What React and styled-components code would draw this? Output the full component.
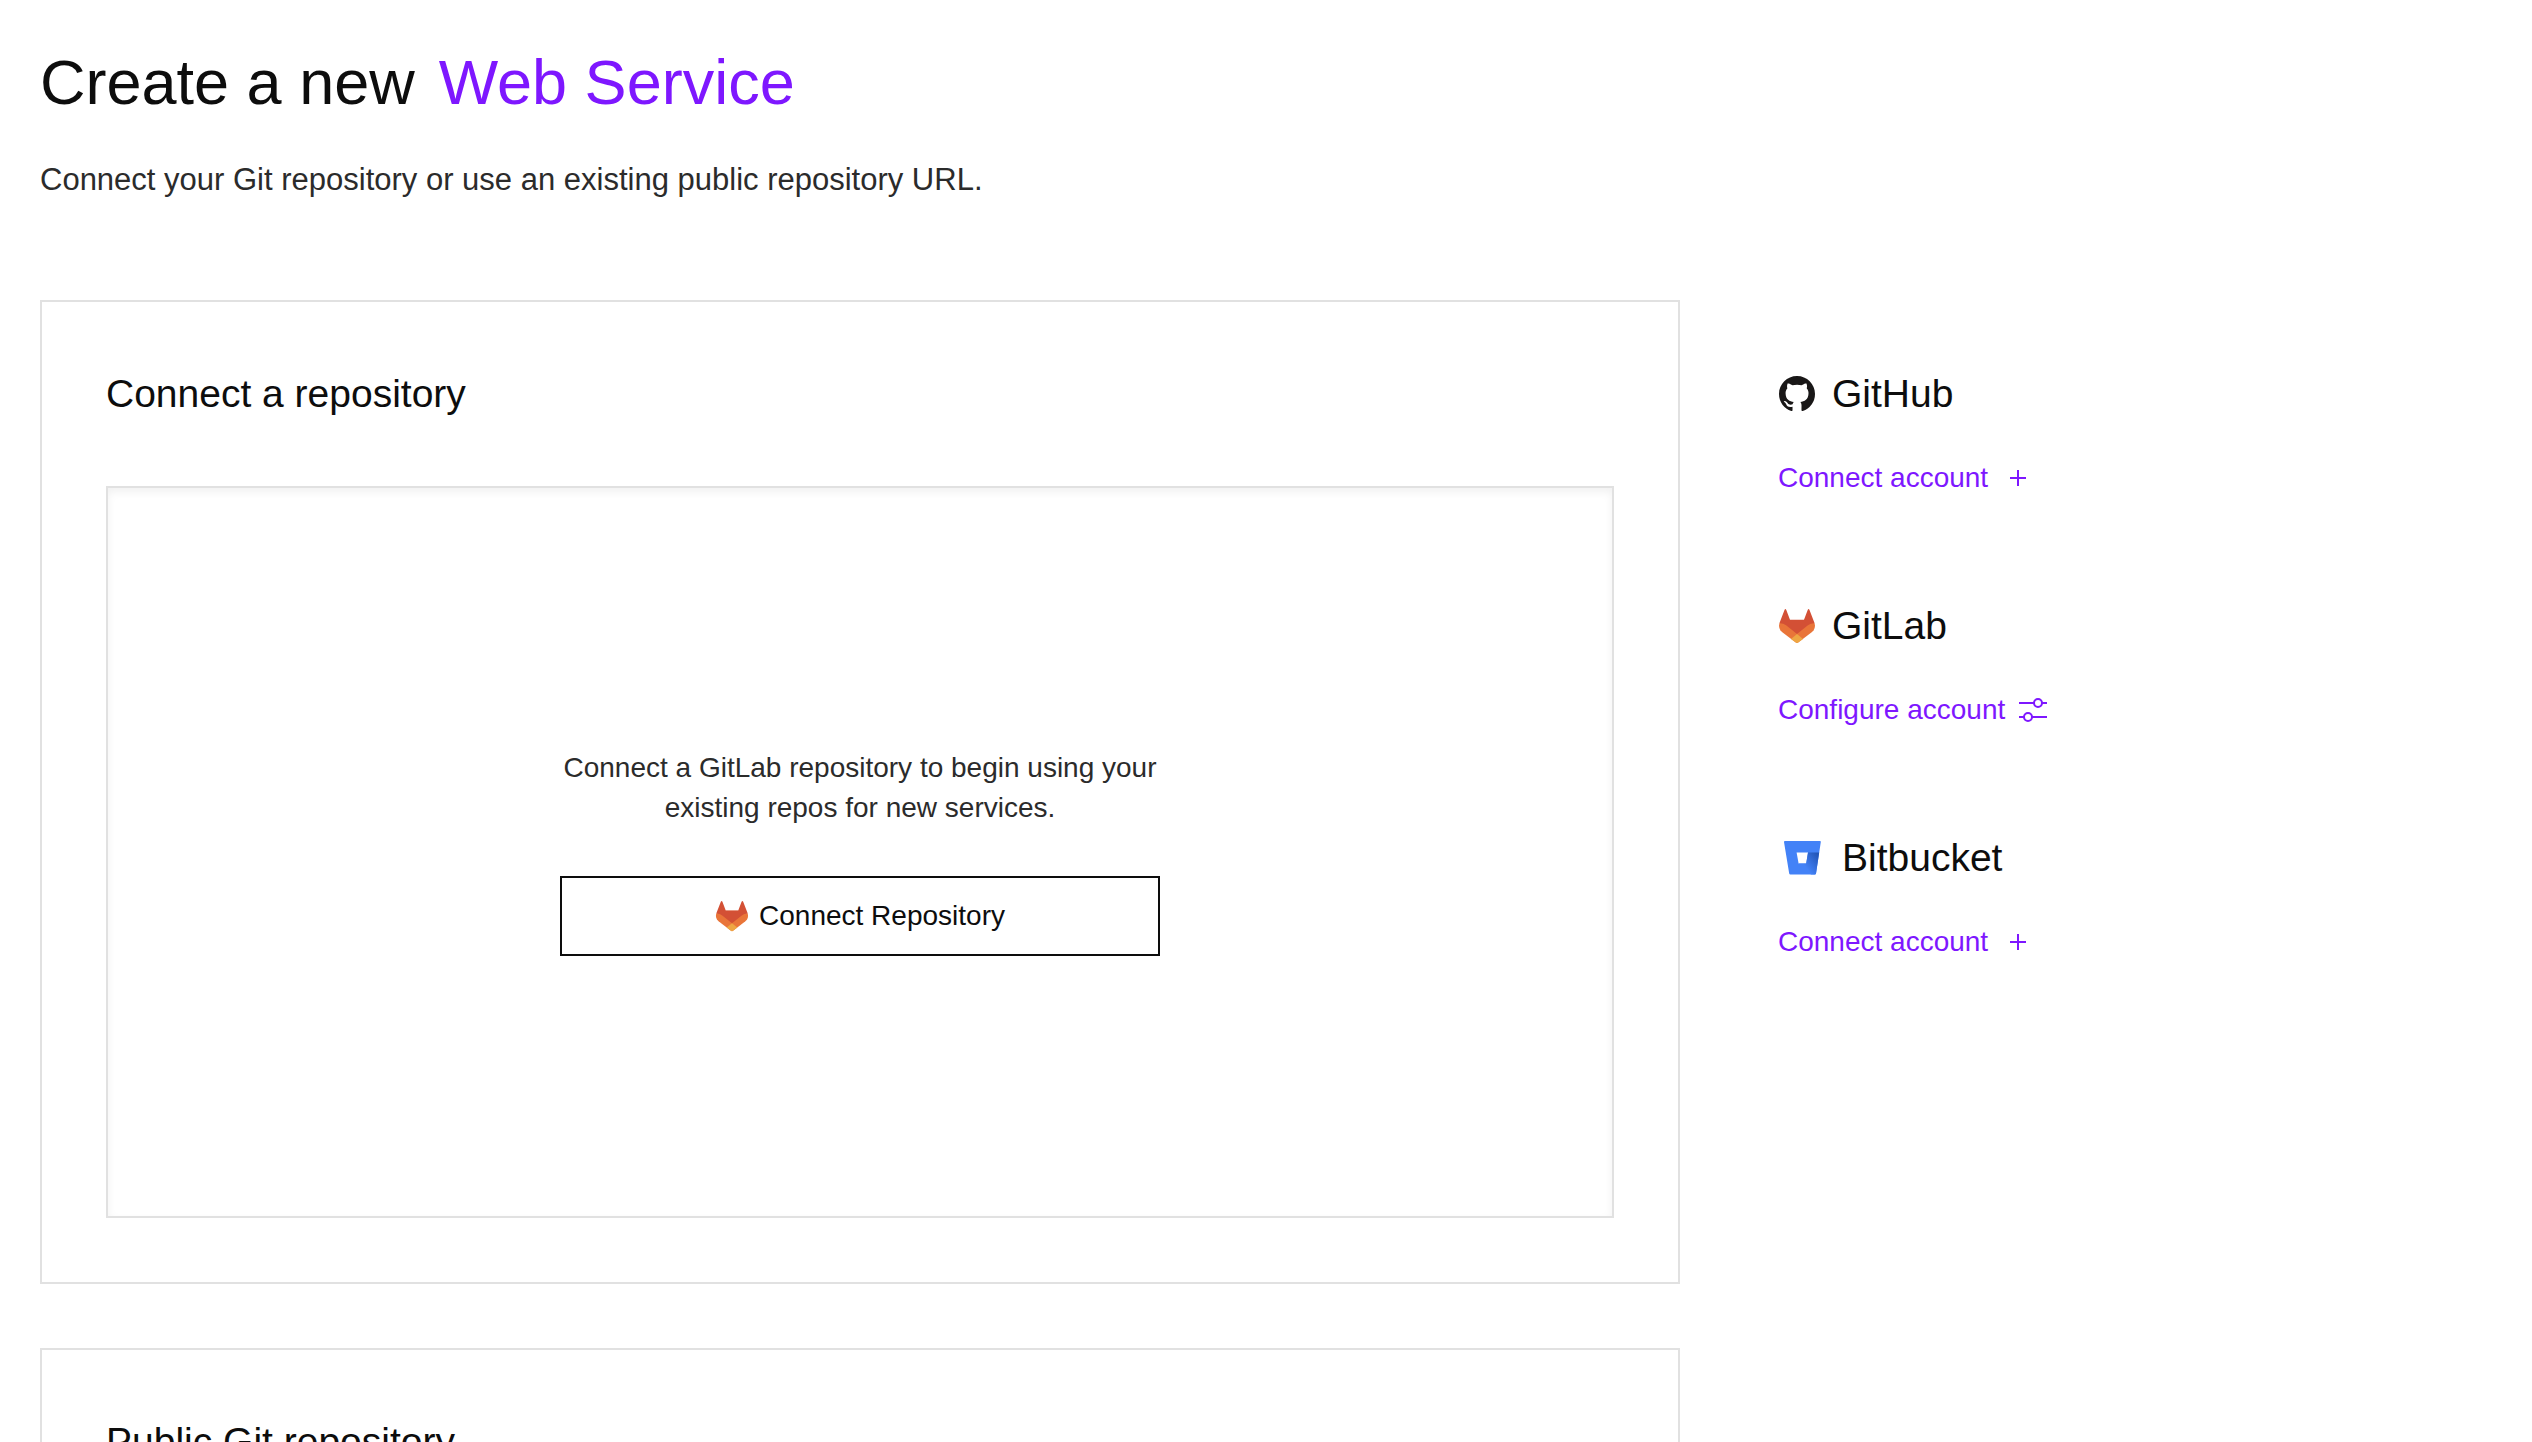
// IMPORTS
  //-Modules
  import { useId } from 'react'
  import styled, { createGlobalStyle } from 'styled-components'
//


// STYLES

  const colors = {
    dark: '#0d0d0d',
    text: '#2b2b2b',
    purple: '#7e17ff',
    line: '#e1e1e1',
  }

  const GlobalStyle = createGlobalStyle`
    *{
      box-sizing: border-box;
    }

    body{
      margin: 0;
      background: #fff;
      color: ${colors.dark};
      font-family: "Liberation Sans", Arial, sans-serif;
    }
  `

  const Page = styled.main`
    padding: 40px;
  `

  const Header = styled.header`
    margin-bottom: 96px;

    h1{
      display: flex;
      flex-wrap: wrap;
      gap: 24px;
      margin: 0 0 32px;
      font-weight: normal;
      font-size: 63px;
      line-height: 84px;
    }

    p{
      margin: 0;
      font-size: 31px;
      line-height: 48px;
      color: ${colors.text};
    }
  `

  const Highlight = styled.span`
    color: ${colors.purple};
  `

  const Columns = styled.div`
    display: grid;
    grid-template-columns: minmax(0, 1fr) 714px;
    column-gap: 98px;
  `

  const Cards = styled.div`
    display: flex;
    flex-direction: column;
    gap: 64px;
  `

  const Card = styled.section`
    padding: 64px;
    border: 2px solid ${colors.line};
  `

  const Title = styled.h2`
    display: flex;
    align-items: center;
    gap: 16px;
    margin: 0 0 ${props => props.$space}px;
    font-weight: normal;
    font-size: 39px;
    line-height: 56px;
  `

  const RepoPanel = styled.div`
    display: flex;
    flex-direction: column;
    align-items: center;
    justify-content: center;
    gap: 48px;
    min-height: 732px;
    border: 2px solid ${colors.line};
    box-shadow: inset 0 4px 8px rgba(0, 0, 0, 0.06);

    p{
      max-width: 600px;
      margin: 0;
      font-size: 28px;
      line-height: 40px;
      text-align: center;
      color: ${colors.text};
    }
  `

  const RepoButton = styled.button`
    display: flex;
    align-items: center;
    justify-content: center;
    gap: 10px;
    width: 600px;
    max-width: 100%;
    height: 80px;
    padding: 0 24px;
    border: 2px solid ${colors.dark};
    background: #fff;
    font-family: inherit;
    font-size: 28px;
    color: ${colors.dark};
    cursor: pointer;
  `

  const Providers = styled.aside`
    display: flex;
    flex-direction: column;
    gap: 100px;
    padding-top: 66px;
  `

  const AccountLink = styled.a`
    display: inline-flex;
    align-items: center;
    gap: 14px;
    font-size: 28px;
    line-height: 40px;
    color: ${colors.purple};
    text-decoration: none;
  `

//


// ICONS

    function GitHubLogo() {
        return (
            <svg width="38" height="38" viewBox="-1 -1 38 38" aria-hidden="true">
                <path fill="#191717" transform="scale(2.25)" d="M8 0C3.58 0 0 3.58 0 8c0 3.54 2.29 6.53 5.47 7.59.4.07.55-.17.55-.38 0-.19-.01-.82-.01-1.49-2.01.37-2.53-.49-2.69-.94-.09-.23-.48-.94-.82-1.13-.28-.15-.68-.52-.01-.53.63-.01 1.08.58 1.23.82.72 1.21 1.87.87 2.33.66.07-.52.28-.87.51-1.07-1.78-.2-3.64-.89-3.64-3.95 0-.87.31-1.59.82-2.15-.08-.2-.36-1.02.08-2.12 0 0 .67-.21 2.2.82.64-.18 1.32-.27 2-.27s1.36.09 2 .27c1.53-1.04 2.2-.82 2.2-.82.44 1.1.16 1.92.08 2.12.51.56.82 1.27.82 2.15 0 3.07-1.87 3.75-3.65 3.95.29.25.54.73.54 1.48 0 1.07-.01 1.93-.01 2.2 0 .21.15.46.55.38A8.01 8.01 0 0 0 16 8c0-4.42-3.58-8-8-8Z" />
            </svg>
        )
    }

    function GitLabLogo({ size }) {
        return (
            <svg width={size} height={size} viewBox="-1 -1 38 38" aria-hidden="true">
                <path fill="#e97539" d="M0.4 15.2C-0.6 18.5 0.4 21.8 3 24L16.8 34.6Q18 35.5 19.2 34.6L33 24C35.6 21.8 36.6 18.5 35.6 15.2L25 12H11Z" />
                <path fill="#d35035" d="M18 26 7.4 17.6Q4.2 15 0.4 15.2L5.5 2Q6.4 0.2 7.3 2L11 11.8H25L28.7 2Q29.6 0.2 30.5 2L35.6 15.2Q31.8 15 28.6 17.6Z" />
                <path fill="#eea643" d="M18 26 12 30.9 16.8 34.6Q18 35.5 19.2 34.6L24 30.9Z" />
            </svg>
        )
    }

    function BitbucketLogo() {
        const id = useId()

        return (
            <svg width="48" height="48" viewBox="0 0 48 48" aria-hidden="true">
                <defs>
                    <linearGradient id={id} x1="41" y1="19" x2="26" y2="31" gradientUnits="userSpaceOnUse">
                        <stop offset="0.1" stopColor="#2356b8" />
                        <stop offset="1" stopColor="#4382f7" />
                    </linearGradient>
                </defs>
                <path fill="#4382f7" fillRule="evenodd" d="M7 7H42Q43 7 42.8 8L38 39.4Q37.8 40.5 36.8 40.5H12.4Q11.4 40.5 11.2 39.4L6 8Q5.9 7 7 7ZM18.6 18.5 20.6 29.5H28.2L30 18.5Z" />
                <path fill={`url(#${id})`} d="M30 18.5H41.2L38 39.4Q37.8 40.5 36.8 40.5H33L20.6 29.5H28.2Z" />
            </svg>
        )
    }

    function PlusIcon() {
        return (
            <svg width="32" height="32" viewBox="0 0 32 32" fill="none" stroke="currentColor" strokeWidth="2" aria-hidden="true">
                <path d="M16 8V24M8 16H24" />
            </svg>
        )
    }

    function SlidersIcon() {
        return (
            <svg width="28" height="28" viewBox="0 0 28 28" fill="none" stroke="currentColor" strokeWidth="2" aria-hidden="true">
                <path d="M0 7H15M23 7H28M0 21H5M13 21H28" />
                <circle cx="19" cy="7" r="4" />
                <circle cx="9" cy="21" r="4" />
            </svg>
        )
    }

//


// DATA

    const providers = [
        { name: 'GitHub', logo: <GitHubLogo />, action: 'Connect account', icon: <PlusIcon /> },
        { name: 'GitLab', logo: <GitLabLogo size={38} />, action: 'Configure account', icon: <SlidersIcon /> },
        { name: 'Bitbucket', logo: <BitbucketLogo />, action: 'Connect account', icon: <PlusIcon /> },
    ]

//


//MAIN COMPONENT
    export default function App() {

        return (
            <>
                <GlobalStyle />

                <Page>
                  <Header>
                      <h1>
                          <span>Create a new</span>
                          <Highlight>Web Service</Highlight>
                      </h1>
                      <p>Connect your Git repository or use an existing public repository URL.</p>
                  </Header>

                  <Columns>
                      <Cards>
                          <Card>
                              <Title $space={64}>Connect a repository</Title>
                              <RepoPanel>
                                  <p>Connect a GitLab repository to begin using your existing repos for new services.</p>
                                  <RepoButton type="button">
                                      <GitLabLogo size={34} />
                                      Connect Repository
                                  </RepoButton>
                              </RepoPanel>
                          </Card>

                          <Card>
                              <Title $space={0}>Public Git repository</Title>
                          </Card>
                      </Cards>

                      <Providers>
                          {providers.map(provider => (
                              <div key={provider.name}>
                                  <Title $space={36}>
                                      {provider.logo}
                                      {provider.name}
                                  </Title>
                                  <AccountLink href="#">
                                      {provider.action}
                                      {provider.icon}
                                  </AccountLink>
                              </div>
                          ))}
                      </Providers>
                  </Columns>
                </Page>
            </>
        )

    }
//
